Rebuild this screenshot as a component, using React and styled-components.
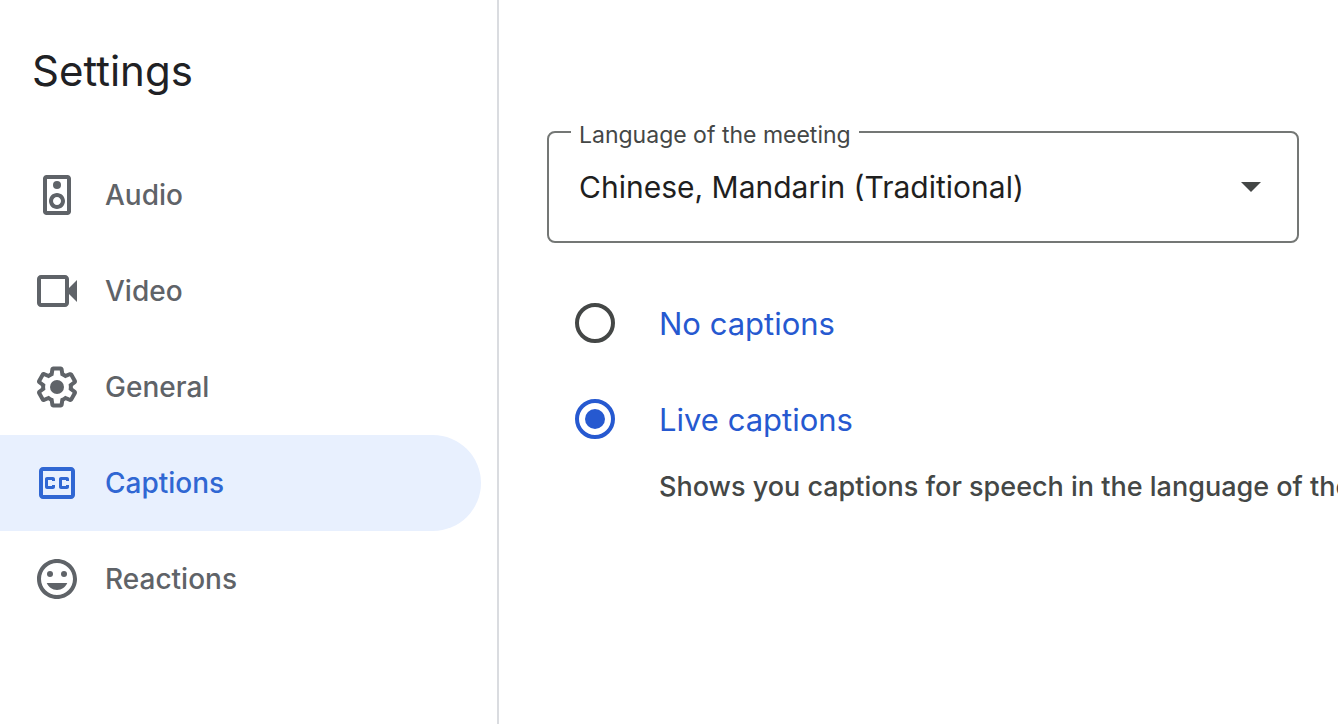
import { useState } from "react";
import styled, { createGlobalStyle } from "styled-components";

const colors = {
  text: "#1f1f1f",
  title: "#202124",
  muted: "#444746",
  nav: "#5f6368",
  navActive: "#3067d3",
  navActiveBg: "#e8f0fe",
  blue: "#2659d0",
  outline: "#747775",
  divider: "#dadce0",
};

const GlobalStyle = createGlobalStyle`
  * {
    box-sizing: border-box;
  }
  body {
    margin: 0;
    background: #ffffff;
    font-family: Inter, "Liberation Sans", sans-serif;
  }
`;

const AudioIcon = () => (
  <Icon viewBox="0 0 24 24" aria-hidden="true">
    <path d="M17.2 2H6.8C5.8 2 5 2.8 5 3.8v16.4c0 1 .8 1.8 1.8 1.8h10.4c1 0 1.8-.8 1.8-1.8V3.8c0-1-.8-1.8-1.8-1.8zM17 20H7V4h10v16z" />
    <circle cx="12" cy="7" r="2" />
    <path d="M12 19c2.2 0 4-1.8 4-4s-1.8-4-4-4-4 1.8-4 4 1.8 4 4 4zm0-6c1.1 0 2 .9 2 2s-.9 2-2 2-2-.9-2-2 .9-2 2-2z" />
  </Icon>
);

const VideoIcon = () => (
  <Icon viewBox="0 0 24 24" aria-hidden="true">
    <path d="M18 10.48V6c0-1.1-.9-2-2-2H4c-1.1 0-2 .9-2 2v12c0 1.1.9 2 2 2h12c1.1 0 2-.9 2-2v-4.48l4 3.98v-11l-4 3.98zM16 18H4V6h12v12z" />
  </Icon>
);

const GeneralIcon = () => (
  <Icon viewBox="0 0 24 24" aria-hidden="true">
    <path d="M13.85 22.25h-3.7c-.74 0-1.36-.54-1.45-1.27l-.27-1.89c-.27-.14-.53-.29-.79-.46l-1.8.72c-.7.26-1.47-.03-1.81-.65L2.2 15.53c-.35-.66-.2-1.44.36-1.88l1.53-1.19c-.01-.15-.02-.3-.02-.46 0-.15.01-.31.02-.46l-1.52-1.19c-.59-.45-.74-1.26-.37-1.88l1.85-3.19c.34-.62 1.11-.9 1.79-.63l1.81.73c.26-.17.52-.32.78-.46l.27-1.91c.09-.7.71-1.25 1.44-1.25h3.7c.74 0 1.36.54 1.45 1.27l.27 1.89c.27.14.53.29.79.46l1.8-.72c.71-.26 1.48.03 1.82.65l1.84 3.18c.36.66.2 1.44-.36 1.88l-1.52 1.19c.01.15.02.3.02.46s-.01.31-.02.46l1.52 1.19c.56.45.72 1.23.37 1.86l-1.86 3.22c-.34.62-1.11.9-1.8.63l-1.8-.72c-.26.17-.52.32-.78.46l-.27 1.91c-.1.68-.72 1.22-1.46 1.22zm-3.23-2h2.76l.37-2.55.53-.22c.44-.18.88-.44 1.34-.78l.45-.34 2.38.96 1.38-2.4-2.03-1.58.07-.56c.03-.26.06-.51.06-.78s-.03-.53-.06-.78l-.07-.56 2.03-1.58-1.39-2.4-2.39.96-.45-.35c-.42-.32-.87-.58-1.33-.77l-.52-.22-.37-2.55h-2.76l-.37 2.55-.53.21c-.44.19-.88.44-1.34.79l-.45.33-2.38-.95-1.39 2.39 2.03 1.58-.07.56a7 7 0 0 0-.06.79c0 .26.02.53.06.78l.07.56-2.03 1.58 1.38 2.4 2.39-.96.45.35c.43.33.86.58 1.33.77l.53.22.38 2.55z" />
    <circle cx="12" cy="12" r="3.5" />
  </Icon>
);

const CaptionsIcon = () => (
  <Icon viewBox="0 0 24 24" aria-hidden="true">
    <path d="M19 4H5c-1.11 0-2 .9-2 2v12c0 1.1.89 2 2 2h14c1.1 0 2-.9 2-2V6c0-1.1-.9-2-2-2zm0 14H5V6h14v12zM7 15h3c.55 0 1-.45 1-1v-1H9.5v.5h-2v-3h2v.5H11v-1c0-.55-.45-1-1-1H7c-.55 0-1 .45-1 1v4c0 .55.45 1 1 1zm7 0h3c.55 0 1-.45 1-1v-1h-1.5v.5h-2v-3h2v.5H18v-1c0-.55-.45-1-1-1h-3c-.55 0-1 .45-1 1v4c0 .55.45 1 1 1z" />
  </Icon>
);

const ReactionsIcon = () => (
  <Icon viewBox="0 0 24 24" aria-hidden="true">
    <path d="M12 2C6.48 2 2 6.48 2 12s4.48 10 10 10 10-4.48 10-10S17.52 2 12 2zm0 18c-4.42 0-8-3.58-8-8s3.58-8 8-8 8 3.58 8 8-3.58 8-8 8z" />
    <circle cx="8.5" cy="9.5" r="1.5" />
    <circle cx="15.5" cy="9.5" r="1.5" />
    <path d="M12 17.5c2.33 0 4.31-1.46 5.11-3.5H6.89c.8 2.04 2.78 3.5 5.11 3.5z" />
  </Icon>
);

const sections = [
  { name: "Audio", icon: AudioIcon },
  { name: "Video", icon: VideoIcon },
  { name: "General", icon: GeneralIcon },
  { name: "Captions", icon: CaptionsIcon },
  { name: "Reactions", icon: ReactionsIcon },
];

const App = () => {
  const [section, setSection] = useState("Captions");
  const [mode, setMode] = useState("live");

  return (
    <Page>
      <GlobalStyle />
      <Sidebar>
        <Title>Settings</Title>
        <Nav>
          {sections.map(({ name, icon: SectionIcon }) => (
            <NavButton
              key={name}
              type="button"
              $active={name === section}
              onClick={() => setSection(name)}
            >
              <SectionIcon />
              {name}
            </NavButton>
          ))}
        </Nav>
      </Sidebar>
      <Content>
        <Field>
          <Legend>
            <label htmlFor="language">Language of the meeting</label>
          </Legend>
          <SelectRow>
            <Select id="language">
              <option>Chinese, Mandarin (Traditional)</option>
            </Select>
            <Arrow viewBox="0 0 20 10" aria-hidden="true">
              <path d="M0 0h20L10 10z" />
            </Arrow>
          </SelectRow>
        </Field>
        <Options>
          <Option>
            <Radio
              type="radio"
              name="captions"
              checked={mode === "none"}
              onChange={() => setMode("none")}
            />
            No captions
          </Option>
          <Option>
            <Radio
              type="radio"
              name="captions"
              checked={mode === "live"}
              onChange={() => setMode("live")}
            />
            Live captions
          </Option>
          <Description>
            Shows you captions for speech in the language of the
          </Description>
        </Options>
      </Content>
    </Page>
  );
};

const Page = styled.div`
  display: flex;
  min-height: 100vh;
`;
const Sidebar = styled.aside`
  flex: 0 0 499px;
  padding: 43px 16px 0 0;
  border-right: 2px solid ${colors.divider};
`;
const Title = styled.h1`
  margin: 0 0 48px;
  padding-left: 32px;
  color: ${colors.title};
  font-size: 42px;
  font-weight: 400;
  line-height: 56px;
`;
const Nav = styled.nav`
  display: flex;
  flex-direction: column;
`;
const NavButton = styled.button`
  display: flex;
  align-items: center;
  gap: 24px;
  height: 96px;
  padding: 0 0 0 33px;
  border: none;
  border-radius: 0 48px 48px 0;
  background: ${({ $active }) => ($active ? colors.navActiveBg : "none")};
  color: ${({ $active }) => ($active ? colors.navActive : colors.nav)};
  font-family: inherit;
  font-size: 28px;
  font-weight: 500;
  cursor: pointer;
`;
const Icon = styled.svg`
  width: 48px;
  height: 48px;
  fill: currentColor;
`;
const Content = styled.main`
  flex: 1;
  min-width: 0;
  padding: 117px 39px 0 48px;
  overflow: hidden;
`;
const Field = styled.fieldset`
  margin: 0;
  padding: 0 36px 14px 22px;
  border: 2px solid ${colors.outline};
  border-radius: 8px;
`;
const Legend = styled.legend`
  padding: 6px 8px 0;
  color: ${colors.muted};
  font-size: 23px;
  line-height: 24px;
`;
const SelectRow = styled.div`
  display: flex;
  align-items: center;
`;
const Select = styled.select`
  flex: 1;
  min-width: 0;
  height: 80px;
  margin-right: -20px;
  padding: 0 20px 0 8px;
  border: none;
  background: none;
  color: ${colors.text};
  font-family: inherit;
  font-size: 30px;
  appearance: none;
  cursor: pointer;
`;
const Arrow = styled.svg`
  flex: none;
  width: 20px;
  height: 10px;
  fill: ${colors.muted};
  pointer-events: none;
`;
const Options = styled.div`
  display: flex;
  flex-direction: column;
  padding: 32px 0 0 28px;
`;
const Option = styled.label`
  display: flex;
  align-items: center;
  gap: 44px;
  height: 96px;
  color: ${colors.blue};
  font-size: 31px;
  cursor: pointer;
`;
const Radio = styled.input`
  flex: none;
  display: grid;
  place-items: center;
  width: 40px;
  height: 40px;
  margin: 0;
  border: 4px solid ${colors.muted};
  border-radius: 50%;
  appearance: none;
  cursor: pointer;

  &:checked {
    border-color: ${colors.blue};
  }
  &:checked::before {
    content: "";
    width: 20px;
    height: 20px;
    border-radius: 50%;
    background: ${colors.blue};
  }
`;
const Description = styled.p`
  margin: 0;
  padding-left: 84px;
  color: ${colors.muted};
  font-size: 27px;
  font-weight: 500;
  line-height: 40px;
  white-space: nowrap;
`;

export default App;
